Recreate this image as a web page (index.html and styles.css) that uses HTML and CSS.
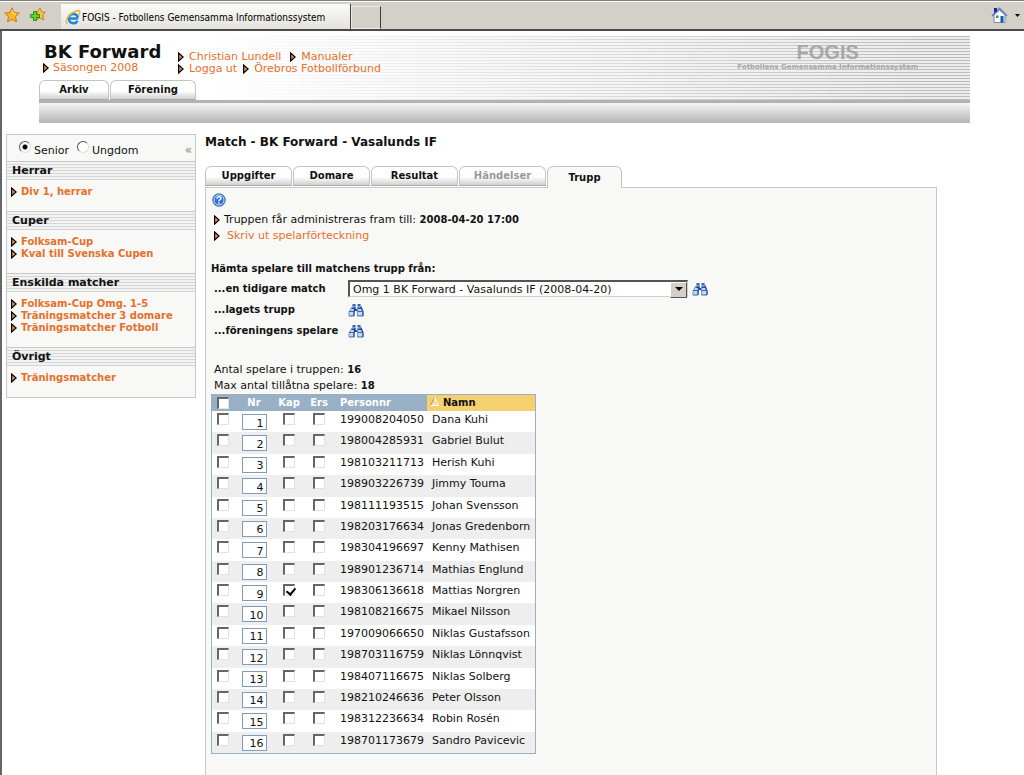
FILE: index.html
```
<!DOCTYPE html>
<html lang="sv">
<head>
<meta charset="utf-8">
<title>FOGIS - Fotbollens Gemensamma Informationssystem</title>
<link rel="stylesheet" href="styles.css">
</head>
<body>
<svg class="defs" aria-hidden="true">
  <symbol id="arrow" viewBox="0 0 6 10"><path d="M0.6 1V9L5.2 5Z" fill="#e08a4c" stroke="#000" stroke-width="1.200"/></symbol>
  <symbol id="binoculars" viewBox="0 0 16 14">
    <path d="M5 1.500L1 9v4h5V9.500L8 2.500V1.500zM10 1.500v1.500L9.500 9.500V13h5.500V9L12.500 1.500z" fill="#c4d8f4"/>
    <path d="M4.500 1h3v2.500h-3zM9.500 1h3v2.500h-3z" fill="#3c64b0"/>
    <path d="M3.500 4.500h4v1.500h-4zM9 4.500h4.500V6H9zM6.500 6h3.500v2h-3.500z" fill="#28499a"/>
    <path d="M7 4l-1 5.500V13M12.800 3.500L15 9v4" fill="none" stroke="#28499a" stroke-width="1.400"/>
    <path d="M4 4L1 9v4M9.600 4v9" fill="none" stroke="#6f94d2"/>
    <path d="M1 8.500h5M9.500 8.500H15M1 13h5M9.500 13H15" stroke="#3c64b0"/>
  </symbol>
</svg>

<div class="chrome">
  <div class="favorites">
    <svg width="16" height="16" viewBox="0 0 16 16"><path d="M8 .8l2.200 4.700 5 .6-3.700 3.500 1 5.300L8 12.300l-4.500 2.600 1-5.300L.8 6.100l5-.6z" fill="#fdb827" stroke="#c9791a"/><path d="M8 3l1.200 3.500L12 7" stroke="#ffe9a0" fill="none"/></svg>
    <svg width="16" height="16" viewBox="0 0 16 16"><path d="M10 1l1.700 3.800 3.800.5-2.700 2.700.9 5L10 11l-3 1.500L7 5z" fill="#fdc33c" stroke="#b98a24"/><path d="M3.500 4.500h3v3h3v3h-3v3h-3v-3h-3v-3h3z" fill="#5fd435" stroke="#2b8a1c"/></svg>
  </div>
  <div class="browser-tab">
    <svg width="16" height="16" viewBox="0 0 16 16"><path d="M13 9.500H4.800M12.500 11.800A4.700 4.700 0 1 1 13 8.800" fill="none" stroke="#1f86dd" stroke-width="2.600"/><path d="M2.500 15C-1.500 13 4.500 3 13.500 1.500c2 0 1.500 3 .2 4.500" fill="none" stroke="#e9b52a" stroke-width="1.400"/></svg>
    <span>FOGIS - Fotbollens Gemensamma Informationssystem</span>
  </div>
  <div class="new-tab"></div>
  <div class="home">
    <svg width="17" height="17" viewBox="0 0 17 17"><path d="M3 8v7.500h11V8L8.500 3z" fill="#f4f8ff" stroke="#6f8fc2"/><path d="M1 9l7.500-7.500L16 9" fill="none" stroke="#5a80bd" stroke-width="1.600"/><path d="M3 1h3v3L3 6z" fill="#2020b0"/><path d="M5 8.500h2.500V11H5z" fill="#777"/><path d="M9.500 9h3v6.500h-3z" fill="#12619f"/></svg>
    <svg width="5" height="3" viewBox="0 0 5 3"><path d="M0 0h5L2.500 3z"/></svg>
  </div>
</div>

<div class="page">
  <header class="site-header">
    <div class="banner">
      <div class="club">
        <h1>BK Forward</h1>
        <a href="#"><svg class="arrow"><use href="#arrow"/></svg>Säsongen 2008</a>
      </div>
      <div class="user-links">
        <div class="link-row wide"><a href="#"><svg class="arrow"><use href="#arrow"/></svg>Christian Lundell</a><a href="#"><svg class="arrow"><use href="#arrow"/></svg>Manualer</a></div>
        <div class="link-row"><a href="#"><svg class="arrow"><use href="#arrow"/></svg>Logga ut</a><a href="#"><svg class="arrow"><use href="#arrow"/></svg>Örebros Fotbollförbund</a></div>
      </div>
      <div class="logo"><strong>FOGIS</strong><span>Fotbollens Gemensamma Informationssystem</span></div>
    </div>
    <nav class="menu"><a class="tab arkiv" href="#">Arkiv</a><a class="tab forening" href="#">Förening</a></nav>
    <div class="header-bar"></div>
  </header>

  <div class="columns">
    <aside class="sidebar">
      <div class="age">
        <label><input type="radio" name="age" checked>Senior</label>
        <label><input type="radio" name="age">Ungdom</label>
        <a class="collapse" href="#">«</a>
      </div>
      <h2>Herrar</h2>
      <ul><li><a href="#"><svg class="arrow"><use href="#arrow"/></svg>Div 1, herrar</a></li></ul>
      <h2>Cuper</h2>
      <ul>
        <li><a href="#"><svg class="arrow"><use href="#arrow"/></svg>Folksam-Cup</a></li>
        <li><a href="#"><svg class="arrow"><use href="#arrow"/></svg>Kval till Svenska Cupen</a></li>
      </ul>
      <h2>Enskilda matcher</h2>
      <ul>
        <li><a href="#"><svg class="arrow"><use href="#arrow"/></svg>Folksam-Cup Omg. 1-5</a></li>
        <li><a href="#"><svg class="arrow"><use href="#arrow"/></svg>Träningsmatcher 3 domare</a></li>
        <li><a href="#"><svg class="arrow"><use href="#arrow"/></svg>Träningsmatcher Fotboll</a></li>
      </ul>
      <h2>Övrigt</h2>
      <ul><li><a href="#"><svg class="arrow"><use href="#arrow"/></svg>Träningsmatcher</a></li></ul>
    </aside>

    <main class="main">
      <h2 class="match-title">Match - BK Forward - Vasalunds IF</h2>
      <nav class="tabs">
        <a class="tab" href="#">Uppgifter</a><a class="tab domare" href="#">Domare</a><a class="tab" href="#">Resultat</a><a class="tab disabled" href="#">Händelser</a><a class="tab active" href="#">Trupp</a>
      </nav>
      <section class="panel">
        <a class="help" href="#" aria-label="Hjälp"><svg width="14" height="14" viewBox="0 0 14 14"><circle cx="7" cy="7" r="6.300" fill="#2d6fd6" stroke="#4b78c0"/><circle cx="7" cy="7" r="5" fill="none" stroke="#cfe2fb"/><path d="M5 5.700Q5 3.800 7 3.800T9 5.500Q9 6.500 7 7.300V8.300M7 9.300v1.400" fill="none" stroke="#fff" stroke-width="1.400"/></svg></a>
        <p class="info"><svg class="arrow"><use href="#arrow"/></svg>Truppen får administreras fram till: <b>2008-04-20 17:00</b></p>
        <p class="info"><svg class="arrow"><use href="#arrow"/></svg><a class="print" href="#">Skriv ut spelarförteckning</a></p>

        <h3>Hämta spelare till matchens trupp från:</h3>
        <div class="fetch">
          <label for="previous">...en tidigare match</label>
          <div class="fetch-value">
            <span class="dropdown"><select id="previous"><option>Omg 1 BK Forward - Vasalunds IF (2008-04-20)</option></select></span>
            <button aria-label="Hämta från match"><svg width="16" height="14"><use href="#binoculars"/></svg></button>
          </div>
          <span>...lagets trupp</span>
          <button aria-label="Hämta lagets trupp"><svg width="16" height="14"><use href="#binoculars"/></svg></button>
          <span>...föreningens spelare</span>
          <button aria-label="Hämta föreningens spelare"><svg width="16" height="14"><use href="#binoculars"/></svg></button>
        </div>

        <p class="count">Antal spelare i truppen: <b>16</b></p>
        <p class="count">Max antal tillåtna spelare: <b>18</b></p>

        <table class="players">
          <colgroup><col class="c-check"><col class="c-nr"><col class="c-flag"><col class="c-flag"><col class="c-id"><col class="c-name"></colgroup>
          <thead>
            <tr><th><input type="checkbox" aria-label="Markera alla"></th><th>Nr</th><th>Kap</th><th>Ers</th><th class="left">Personnr</th><th class="sorted"><svg width="9" height="9" viewBox="0 0 9 9"><path d="M.5 8.500L4.500 .5l4 8z" fill="#f9dc96"/><path d="M.5 8.500L4.500 .5" stroke="#b9965a"/><path d="M4.500 .5l4 8h-8" fill="none" stroke="#fff"/></svg>Namn</th></tr>
          </thead>
          <tbody id="players"></tbody>
        </table>
      </section>
    </main>
  </div>
</div>
<script src="players.js"></script>
</body>
</html>
```
FILE: players.js
```
const players = [
  ["199008204050", "Dana Kuhi"],
  ["198004285931", "Gabriel Bulut"],
  ["198103211713", "Herish Kuhi"],
  ["198903226739", "Jimmy Touma"],
  ["198111193515", "Johan Svensson"],
  ["198203176634", "Jonas Gredenborn"],
  ["198304196697", "Kenny Mathisen"],
  ["198901236714", "Mathias Englund"],
  ["198306136618", "Mattias Norgren"],
  ["198108216675", "Mikael Nilsson"],
  ["197009066650", "Niklas Gustafsson"],
  ["198703116759", "Niklas Lönnqvist"],
  ["198407116675", "Niklas Solberg"],
  ["198210246636", "Peter Olsson"],
  ["198312236634", "Robin Rosén"],
  ["198701173679", "Sandro Pavicevic"]
];
const captain = 9;

document.getElementById("players").innerHTML = players.map(([id, name], i) => {
  const nr = i + 1;
  return `<tr>
    <td><input type="checkbox" aria-label="Markera ${name}"></td>
    <td><input class="nr" type="text" value="${nr}" aria-label="Nummer ${name}"></td>
    <td><input type="checkbox" aria-label="Kapten ${name}"${nr === captain ? " checked" : ""}></td>
    <td><input type="checkbox" aria-label="Ersättare ${name}"></td>
    <td class="left">${id}</td>
    <td class="left">${name}</td>
  </tr>`;
}).join("");
```
FILE: styles.css
```
* { box-sizing: border-box; }
body {
  margin: 0;
  min-height: 100vh;
  display: flex;
  flex-direction: column;
  background: #fff;
  color: #111;
  font: 11px/12px "DejaVu Sans", Verdana, sans-serif;
}
h1, h2, h3, p, ul { margin: 0; padding: 0; }
ul { list-style: none; }
a { color: #e5702c; text-decoration: none; }
b { font-size: 10px; }
button { border: 0; padding: 0; background: none; display: flex; cursor: pointer; }
svg { flex: none; }
.defs { position: absolute; width: 0; height: 0; }
.arrow { width: 6px; height: 10px; margin-right: 4px; }

/* Browser toolbar */
.chrome {
  display: flex;
  align-items: flex-end;
  height: 31px;
  background: #d4d0c8;
  border-top: 1px solid #808080;
  border-bottom: 2px solid #4a4a4a;
  box-shadow: inset 0 1px #fff;
}
.favorites { display: flex; gap: 10px; padding: 0 0 6px 4px; width: 61px; }
.browser-tab {
  display: flex;
  align-items: center;
  gap: 1px;
  width: 290px;
  height: 25px;
  padding: 1px 0 0 4px;
  background: linear-gradient(#fbfbfa, #e4e2dd);
  border-right: 1px solid #404040;
  font: 10px "DejaVu Sans Condensed", Tahoma, sans-serif;
  white-space: nowrap;
  color: #000;
}
.new-tab {
  width: 30px;
  height: 23px;
  border: 1px solid #eceae5;
  border-right-color: #404040;
}
.home { display: flex; align-items: center; gap: 7px; margin-left: auto; padding: 0 4px 5px 0; }

.page {
  flex: 1;
  display: flex;
  flex-direction: column;
  border-left: 2px solid #666;
}

/* Header */
.site-header {
  margin: 5px 54px 0 37px;
  background:
    linear-gradient(to right, #fff 18%, rgba(255, 255, 255, 0) 95%),
    repeating-linear-gradient(#bdbdbd 0 1px, #ececec 1px 3px);
}
.banner { display: flex; padding: 5px 52px 0 4px; height: 44px; }
.banner a { display: flex; align-items: center; }
.club { width: 135px; }
.club h1 { font-size: 18px; line-height: 21px; padding-left: 1px; white-space: nowrap; }
.user-links { padding-top: 10px; }
.user-links .arrow { margin-right: 5px; }
.link-row { display: flex; gap: 6px; }
.link-row.wide { gap: 9px; }
.logo {
  margin-left: auto;
  display: flex;
  flex-direction: column;
  align-items: center;
  color: #a8a8a8;
  font-weight: bold;
}
.logo strong { font: bold 20px/22px "Liberation Sans", Arial, sans-serif; }
.logo span { font-size: 7px; line-height: 9px; }
.menu { display: flex; gap: 1px; height: 20px; }
.tab {
  display: flex;
  align-items: center;
  justify-content: center;
  height: 20px;
  border: 1px solid #c4c4c4;
  border-bottom-color: #aaa;
  border-radius: 6px 6px 0 0;
  background: linear-gradient(#fff 55%, #d0d0d0);
  color: #111;
  font-size: 10px;
  font-weight: bold;
}
.arkiv { width: 70px; }
.forening { width: 86px; }
.header-bar {
  height: 23px;
  border-top: 3px solid #b2b2b2;
  background: linear-gradient(#f4f4f4, #b6b6b6);
}

.columns {
  flex: 1;
  display: flex;
  align-items: flex-start;
  gap: 9px;
  padding: 11px 87px 0 4px;
}

/* Sidebar */
.sidebar {
  width: 190px;
  border: 1px solid #c8c8c8;
  background: #f8f8f6;
}
.age { display: flex; height: 26px; padding: 8px 3px 0 12px; gap: 8px; }
.age label { display: flex; align-items: flex-start; gap: 3px; line-height: 15px; }
.age input {
  appearance: none;
  width: 12px;
  height: 12px;
  margin: 0;
  margin-top: -2px;
  border: 1px solid;
  border-color: #555 #ddd #ddd #555;
  border-radius: 50%;
  background: #fff;
}
.age input:checked { background: radial-gradient(#000 2px, #fff 3px); }
.collapse { margin: -5px 0 0 auto; color: #888; font-size: 12px; }
.sidebar h2 {
  height: 19px;
  padding-left: 5px;
  border-top: 1px solid #c8c8c8;
  border-bottom: 1px solid #d4d4d4;
  background: repeating-linear-gradient(#f2f2f2 0 2px, #d6d6d6 2px 3px);
  font-size: 11px;
  line-height: 17px;
}
.sidebar ul { padding: 6px 4px 13px; font-size: 10px; font-weight: bold; }
.sidebar a { display: flex; align-items: center; white-space: nowrap; }

/* Main area */
.main { flex: 1; align-self: stretch; display: flex; flex-direction: column; }
.match-title { font-size: 12px; line-height: 16px; }
.tabs { display: flex; gap: 1px; margin-top: 16px; z-index: 1; }
.tabs .tab { width: 87px; }
.tabs .domare { width: 77px; }
.tabs .disabled { color: #999; }
.tabs .active {
  width: 75px;
  height: 22px;
  margin-bottom: -1px;
  border-bottom: 0;
  background: #f8f8f6;
}
.tabs .tab:not(.active) { margin-bottom: 1px; }
.panel {
  flex: 1;
  padding: 5px 6px 20px 5px;
  border: 1px solid #c8c8c8;
  border-bottom: 0;
  background: #f8f8f6;
}
.help { display: flex; width: 14px; margin-left: 1px; }
.info { display: flex; align-items: center; height: 16px; padding-left: 3px; white-space: pre; }
.help + .info { margin-top: 5px; }
.info .print { padding-left: 3px; }
.panel h3 { margin-top: 17px; font-size: 10px; line-height: 16px; }
.fetch {
  display: grid;
  grid-template-columns: 134px auto;
  grid-auto-rows: 21px;
  align-items: center;
  margin-top: 1px;
  padding-left: 3px;
  font-size: 10px;
  font-weight: bold;
}
.fetch-value { display: flex; align-items: center; gap: 4px; }
.dropdown { position: relative; width: 340px; height: 17px; }
.dropdown select {
  appearance: none;
  display: block;
  width: 100%;
  height: 17px;
  padding: 0 18px 0 3px;
  border: 1px solid #d4d0c8;
  border-top: 2px solid #555;
  border-left: 2px solid #555;
  border-radius: 0;
  background: #fff;
  color: #111;
  font: 11px/13px "DejaVu Sans", Verdana, sans-serif;
}
.dropdown::before {
  content: "";
  position: absolute;
  right: 1px;
  top: 2px;
  width: 15px;
  height: 14px;
  background: #d4d0c8;
  border: 1px solid;
  border-color: #fff #555 #555 #fff;
  pointer-events: none;
}
.dropdown::after {
  content: "";
  position: absolute;
  right: 5px;
  top: 7px;
  border: 4px solid transparent;
  border-top-color: #000;
  border-bottom: 0;
  pointer-events: none;
}
.count { padding-left: 3px; line-height: 16px; }
.fetch + .count { margin-top: 21px; }

/* Player table */
.players {
  width: 325px;
  height: 360px;
  table-layout: fixed;
  border: 1px solid #98afc6;
  border-spacing: 0;
  background: #fff;
}
.c-check { width: 22px; }
.c-nr { width: 40px; }
.c-flag { width: 30px; }
.c-id { width: 93px; }
.players th {
  height: 16px;
  padding: 0;
  background: #98afc6;
  color: #fff;
  font-size: 10px;
  line-height: 14px;
}
.players th input { display: block; margin: 0 auto; }
.players th.sorted { background: #f5d070; color: #111; text-align: left; padding-left: 3px; }
.sorted svg { margin-right: 4px; }
.players td { padding: 2px 0 0; vertical-align: top; text-align: center; line-height: 14px; }
.players .left { text-align: left; padding-left: 6px; white-space: nowrap; }
.players td.left + td.left { padding-left: 5px; }
.players tbody tr:nth-child(even) { background: #eee; }
.players input[type="checkbox"] {
  appearance: none;
  display: block;
  width: 12px;
  height: 12px;
  margin: 0 auto;
  border: 1px solid #e4e2de;
  border-top: 2px solid #666;
  border-left: 2px solid #666;
  background: #fff;
}
.players input:checked::after {
  content: "";
  display: block;
  width: 4px;
  height: 7px;
  margin: 0 0 0 3px;
  border: solid #000;
  border-width: 0 2px 2px 0;
  transform: rotate(40deg);
}
.players .nr {
  display: block;
  width: 25px;
  height: 16px;
  margin: 1px auto 0;
  padding: 2px 2px 0 0;
  border: 1px solid #7f9db9;
  background: #fff;
  color: #111;
  text-align: right;
  font: 11px/13px "DejaVu Sans", Verdana, sans-serif;
}
```
